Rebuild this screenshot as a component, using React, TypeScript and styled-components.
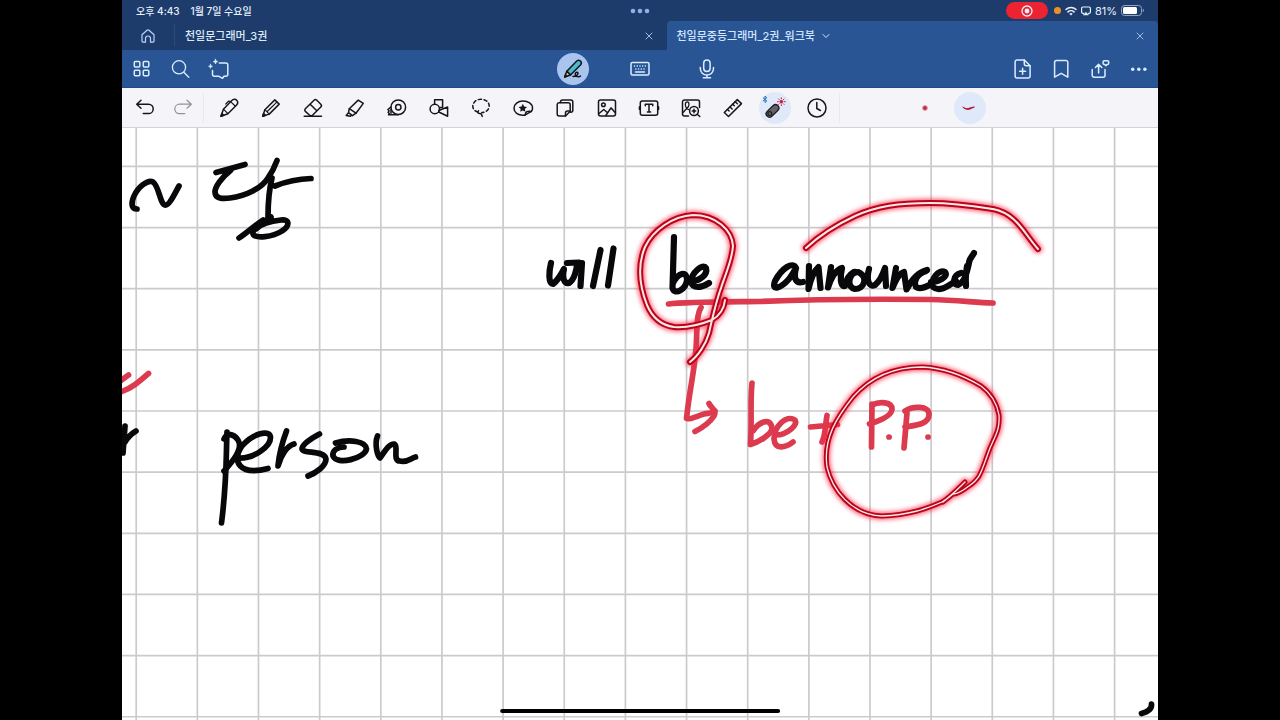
import React from "react";
import styled, { createGlobalStyle } from "styled-components";

const GlobalStyle = createGlobalStyle`
  * {
    box-sizing: border-box;
  }
  body {
    margin: 0;
    background: #000;
    font-family: Inter, "Noto Sans CJK KR", sans-serif;
  }
  button {
    font: inherit;
    color: inherit;
    border: none;
    background: none;
    padding: 0;
    cursor: pointer;
  }
`;

const Screen = styled.div`
  position: relative;
  display: flex;
  flex-direction: column;
  height: 100vh;
  max-width: 100vw;
  aspect-ratio: 259 / 180;
  margin: 0 auto;
  overflow: hidden;
  background: #fff;
`;

const StatusBar = styled.header`
  display: grid;
  grid-template-columns: 1fr auto 1fr;
  align-items: center;
  flex: 0 0 21px;
  padding: 0 14px;
  background: #1d3c6b;
  color: #e8f0fc;
  font-size: 11px;
  line-height: 16px;
`;

const Clock = styled.div`
  display: flex;
  gap: 11px;
  font-size: 10px;
  font-weight: 500;
`;

const StatusIcons = styled.div`
  display: flex;
  justify-content: flex-end;
  align-items: center;
  gap: 4px;
`;

const RecordPill = styled.span`
  display: flex;
  justify-content: center;
  align-items: center;
  width: 42px;
  height: 17px;
  margin-right: 2px;
  border-radius: 9px;
  background: #ec2330;
`;

const MicDot = styled.span`
  width: 7px;
  height: 7px;
  border-radius: 50%;
  background: #ee8f25;
`;

const TabBar = styled.nav`
  display: flex;
  flex: 0 0 29px;
  background: #1d3c6b;
`;

const HomeButton = styled.button`
  display: flex;
  justify-content: center;
  align-items: center;
  flex: 0 0 52px;
  color: #b9d5fa;
`;

const Tab = styled.div<{ $active?: boolean }>`
  display: flex;
  flex: 1;
  align-items: center;
  justify-content: space-between;
  padding: 0 14px 0 10px;
  border-radius: 4px 4px 0 0;
  background: ${(props) => (props.$active ? "#295594" : "transparent")};
  color: ${(props) => (props.$active ? "#d3e6ff" : "#dde8f8")};
`;

const TabDivider = styled.span`
  width: 1px;
  height: 22px;
  margin: 3px 0;
  background: #2c4c7d;
`;

const TabTitle = styled.button`
  display: flex;
  align-items: center;
  gap: 7px;
  font-size: 11px;
  font-weight: 500;
  line-height: 16px;
`;

const CloseButton = styled.button`
  display: flex;
  color: #9dbbe8;
`;

const NavBar = styled.div`
  display: grid;
  grid-template-columns: 1fr auto 1fr;
  flex: 0 0 38px;
  background: #295594;
  border-bottom: 1px solid #214a87;
  color: #d9edff;
`;

const NavGroup = styled.div<{ $end?: boolean }>`
  display: flex;
  justify-content: ${(props) => (props.$end ? "flex-end" : "flex-start")};
`;

const NavButton = styled.button<{ $wide?: boolean }>`
  display: flex;
  justify-content: center;
  align-items: center;
  width: ${(props) => (props.$wide ? 67 : 39)}px;
`;

const ModeCircle = styled.span`
  display: flex;
  justify-content: center;
  align-items: center;
  width: 32px;
  height: 32px;
  border-radius: 50%;
  background: #a9c5ee;
`;

const Toolbar = styled.div`
  display: flex;
  align-items: center;
  flex: 0 0 40px;
  padding-left: 4px;
  background: #f5f4f8;
  border-bottom: 1px solid #d3d2d6;
  color: #17171a;
`;

const HistoryButton = styled.button`
  display: flex;
  justify-content: center;
  width: 38px;
  &:disabled {
    color: #929196;
  }
`;

const Divider = styled.span`
  width: 1px;
  height: 30px;
  margin: 0 4px 0 1px;
  background: #e9e8ed;
`;

const Tools = styled.div`
  display: grid;
  grid-auto-flow: column;
  grid-auto-columns: 1fr;
  justify-items: center;
  flex: 0 0 61%;
`;

const ToolButton = styled.button<{ $active?: boolean }>`
  display: flex;
  justify-content: center;
  align-items: center;
  width: 32px;
  height: 32px;
  border-radius: 50%;
  background: ${(props) => (props.$active ? "#dfe9fa" : "none")};
`;

const LaserOptions = styled.div`
  display: flex;
  gap: 13px;
  margin-left: 65px;
`;

const Page = styled.main`
  flex: 1;
  min-height: 0;
`;

const PageSvg = styled.svg`
  display: block;
  width: 100%;
  height: 100%;
`;

const HomeIndicator = styled.div`
  position: absolute;
  bottom: 7px;
  left: 50%;
  width: 27%;
  height: 4px;
  border-radius: 2px;
  background: #000;
  transform: translateX(-50%);
`;

interface IIconProps {
  children: React.ReactNode;
  width?: number;
  height?: number;
  strokeWidth?: number;
}

const Icon = ({ children, width = 20, height = 20, strokeWidth = 1.5 }: IIconProps) => (
  <svg
    width={width}
    height={height}
    viewBox={`0 0 ${width} ${height}`}
    overflow="visible"
    fill="none"
    stroke="currentColor"
    strokeWidth={strokeWidth}
    strokeLinecap="round"
    strokeLinejoin="round"
    aria-hidden="true"
  >
    {children}
  </svg>
);

const CloseIcon = () => (
  <Icon width={8} height={8} strokeWidth={1}>
    <path d="M1 1l6 6M7 1L1 7" />
  </Icon>
);

const tools = [
  {
    name: "Pen",
    icon: (
      <>
        <path d="M2 18.2L4.400 11.200 12.800 2.600C14.300 1 16.500 1 17.700 2.300s1.200 3.400-.3 4.900L8.900 15.700z" />
        <path d="M4.400 11.200l4.500 4.500M11.600 3.600l4.800 4.600M11.600 3.600L9.800 3 6.800 6" strokeWidth="1.200" />
        <path d="M2 18.200l2.600-.9-1.700-1.700z" fill="currentColor" />
      </>
    ),
  },
  {
    name: "Pencil",
    icon: (
      <>
        <path d="M1.700 18.300L3.900 11.700 13.800 1.900 18.200 6.100 8.200 16.100z" />
        <path d="M3.900 11.700l4.300 4.400M6 13.800l9.800-9.700" strokeWidth="1.200" />
        <path d="M1.700 18.300l2.800-.9-1.900-1.900z" fill="currentColor" />
      </>
    ),
  },
  {
    name: "Eraser",
    icon: (
      <>
        <path d="M2.300 10.800L11 2.200a2 2 0 012.800 0l4 4a2 2 0 010 2.800L9.500 17.200a2 2 0 01-2.800 0l-4.400-3.800a1.900 1.900 0 010-2.600zM7.200 6.200l6.600 6.600" />
        <path d="M1.200 18.200h17.300" />
      </>
    ),
  },
  {
    name: "Highlighter",
    icon: (
      <>
        <path d="M4.300 10.700L13.200 2.100 18.300 5.400 11 15.200z" />
        <path d="M4.300 10.700l-.8 4 4 3L11 15.200M3.500 14.700l-2.300 2.800 4.300.8.800-1" />
      </>
    ),
  },
  {
    name: "Tape",
    icon: (
      <>
        <circle cx="11.300" cy="9.200" r="7.300" />
        <circle cx="11.300" cy="9.200" r="2.700" />
        <path d="M3.800 9.200L.9 11.500l1.200 1.300-1 1.500 1.200 1.300-.8 1.200h9.800M4 11.500v3.800" />
      </>
    ),
  },
  {
    name: "Shapes",
    icon: (
      <>
        <path d="M5.600 6.300V1.700h8v7.700h-3" />
        <circle cx="5.800" cy="11" r="4.700" />
        <path d="M9.800 12.500L18.600 9v9.200l-8.800-4.200z" />
      </>
    ),
  },
  {
    name: "Lasso",
    icon: (
      <>
        <path d="M7 14C3.800 13.200 1.800 11 1.800 8.200 1.800 4.300 5.500 1.200 10 1.200s8.200 3 8.200 6.700-3.400 6.600-7.400 6.600" strokeDasharray="3.200 2.600" />
        <path d="M7.500 12.800c-1.600 1.500-.2 2.900 1.400 2.800 1.400 0 2 1 2.300 2.800" />
      </>
    ),
  },
  {
    name: "Stickers",
    icon: (
      <>
        <path d="M11.800 17.200H10c-5 0-9-2.700-9-7s4-7.100 9-7.100 9.500 2.600 9.500 7.100c0 1.300-.4 2.300-1.100 3.200z" />
        <path d="M12.300 17c-.2-3.300 2.200-4.300 6.100-3.600" />
        <path
          d="M9.800 5.800l1.300 2.700 2.900.4-2.100 2 .5 2.900-2.600-1.400-2.600 1.400.5-2.900-2.100-2 2.900-.4z"
          fill="currentColor"
          stroke="none"
        />
      </>
    ),
  },
  {
    name: "Elements",
    icon: (
      <>
        <path d="M5.500 4.500V4a2 2 0 012-2h8.300a2 2 0 012 2v8.200a2 2 0 01-2 2h-.3" />
        <path d="M4.200 4.700h9a2 2 0 012 2v6.500l-4.700 4.900H4.200a2 2 0 01-2-2V6.700a2 2 0 012-2z" />
        <path d="M10.500 18v-3a2 2 0 012-2h2.700" />
      </>
    ),
  },
  {
    name: "Image",
    icon: (
      <>
        <rect x="1.500" y="2" width="17" height="16" rx="2" />
        <circle cx="6.400" cy="6.800" r="1.800" />
        <path d="M2 15.500l4.800-4 3.700 3.200M8.800 17.500L14 9.800l4.300 5" />
      </>
    ),
  },
  {
    name: "Text",
    icon: (
      <>
        <rect x="1.300" y="3" width="17.400" height="14.200" rx="2" />
        <path d="M6.300 7.800V6.300h7.400v1.500M10 6.300V14M8.400 14h3.200" />
        <path d="M.7 9v2.200M19.300 9v2.200" strokeWidth="2" />
      </>
    ),
  },
  {
    name: "Image search",
    icon: (
      <>
        <path d="M7.500 18H3.500a2 2 0 01-2-2V4a2 2 0 012-2h13a2 2 0 012 2v5.500" />
        <path d="M2 14.500l3.500-3.800 2 .8M6 10.200C3.500 8.500 4 3.800 6.200 3.800S8.800 8.400 6 10.200z" strokeWidth="1.300" />
        <circle cx="13" cy="13" r="4.400" />
        <path d="M16.300 16.300l2.500 2.200M13 11.300v3.400M11.300 13h3.400" />
      </>
    ),
  },
  {
    name: "Ruler",
    icon: (
      <>
        <path d="M1.300 14.500L14.300 1.600l4.200 4L5.500 18.500z" />
        <path d="M4.500 11.500l1.600 1.500M7 9l2.200 2M9.700 6.300l1.600 1.500M12.200 3.800l2.200 2" />
      </>
    ),
  },
  {
    name: "Laser pointer",
    icon: (
      <>
        <path d="M4.500 15.800L10.500 10" stroke="#1c1c1f" strokeWidth="8" />
        <path d="M4.500 15.800L10.500 10" stroke="#646468" strokeWidth="5.400" />
        <circle cx="4.800" cy="15.600" r="1.900" stroke="#1c1c1f" strokeWidth="1.200" />
        <g stroke="#c91f3d" strokeWidth="1">
          <circle cx="16.300" cy="3.700" r="1.400" fill="#c91f3d" />
          <path d="M16.300-.2v.9M16.300 6.700v.9M12.400 3.700h.9M19.300 3.700h.9M13.600 1l.6.600M18.400 5.800l.6.600M19 1l-.6.600M14.200 5.800l-.6.600" />
        </g>
        <path d="M-1.800-.3L1.800 2.900 0 4.500v-6.400L1.800-.3l-3.600 3.200" stroke="#1f72c4" strokeWidth="1" />
      </>
    ),
  },
  {
    name: "Timer",
    icon: (
      <>
        <circle cx="10" cy="10" r="9" />
        <path d="M9.800 4.500v6l3.600 2" />
      </>
    ),
  },
];

const RED = "#dc3a4e";

const blackInk = [
  // ~
  "M137 209C131 209 131 203 134 196C138 187 148 179 153 182C159 186 160 204 165 205C169 206 175 193 179 186",
  // 당
  "M216 172.500L245 164.500M231 170C221 178 215 187 215 192C215 199 223 199 230 198C246 196 262 188 268 178C273 171 275 166 277 160.500",
  "M272 178C269 190 268 203 268 217M275 186C285 182 298 179 311 178.500",
  "M239 238C248 232 254 226 263 220M271 217C262 223 252 230 253 234C255 239 273 237 282 231C290 226 290 219 281 220C271 221 261 224 256 229",
  // r
  "M125 426L123 453M125 442C128 437 131 434 136 431",
  // person
  "M227 432C226 455 227 480 221.500 523",
  "M224 439C227 432 234 434 238 440C244 449 231 463 224 471",
  "M238 458C253 459 271 447 270.500 437C269 429 252 434 242 446C231 462 240 476 268 468.500",
  "M286.500 431C282 443 279 455 278 466C281 455 287 446 294 444",
  "M319.500 434C310 439 302 445 302 449C303 454 325 450 326 459C326 466 316 473 308 476",
  "M335.500 443C349 439 366 441 366.500 449C365 458 337 466 333 456C332 450 338 447 344 447",
  "M377.500 436C374 445 378 457 380 458C384 453 388 444 394 444C399 446 392 461 400 461C407 463 411 458 415.500 457",
  // comma
  "M1151.500 704C1152 709 1147 712 1141.500 713.500",
];

// smaller letters come out a little heavier
const smallInk = [
  // will
  "M551 263C549 271 548 284 553 284C558 280 561 275 564 269C562 278 564 284 569 283C574 280 577 270 577 263",
  "M567 263L579 262.500M582 263L580.500 286M600.500 250L593 286M613.500 248.500L608 285.500",
  // be
  "M674 237L672.500 288C675 296 686 289 687 280C687 270 678 273 673 283",
  "M692 281C699 281 708 275 706 268C703 263 691 273 691 282C693 289 701 288 709 283",
  // announced
  "M796 268C793 261 782 268 775 281C771 292 781 288 789 279C792 275 795 270 796 268C794 276 794 284 803 282",
  "M809 266L808.500 289C811 278 814 271 818.500 267L820.500 288",
  "M831 267L828 287.500C831 278 836 270 842 268C840 277 840 287 845 286C846 280 849 275 854 272",
  "M855 272C848 277 847 287 855 289C864 289 868 278 860 273C857 271 853 273 851 276",
  "M869 269C866 280 869 288 875 285C880 281 883 274 885 268L886 286",
  "M896 268L892.500 288C896 279 900 273 904 272L906.500 289.500C911 281 918 272 927 270",
  "M926 271C917 274 913 281 916 287C920 290 926 287 931 284",
  "M931 282C938 282 949 277 945 272C939 269 930 279 933 287C940 293 949 285 956 281",
  "M961 273C953 275 952 285 958 285C965 282 967 272 969 263C969 259 972 257 974 253M967 266C965 276 966 281 966 286",
];

const redInk = [
  "M119 382L128.500 375M119 392.500C131 389 140 381 148.500 373.500",
  "M668.500 304C685 302 720 302 760 301.500C820 299 880 299 930 299.500C960 300 976 303 993 303",
  "M701 307.500C697 314 697 325 696.500 340C696 365 690 385 686.500 418.500C690 420 697 416 704 414C709 413 713 413 715 411",
  "M709 403.500C711 408 717 410 714 416C710 422 702 428 695 431.500",
  // be +
  "M752 383C750 402 752 418 750.500 444.500C759 442 772 434 772 428C770 416 758 423 753 431",
  "M776 435C787 435 798 425 795 420C786 414 774 427 774 439C775 450 785 448 793 442",
  "M810.500 427L837.500 424.500M827 415.500C825 425 826 434 822 442",
  // P.P.
  "M872 404L871.500 447M872 405C880 401 892 402 892 409C892 416 879 421 869.500 424M889 437h.1",
  "M907 413L904 448M905 411C912 406 930 405 929 415C929 424 916 425 905 427M928 437h.1",
];

const laserStrokes = [
  {
    d: "M690 362C698 356 706 344 709 333C713 315 716 302 721 288C725 275 732 261 733 246C732 230 716 215 693 215C673 216 653 230 645 247C637 266 640 287 647 305C652 317 660 325 674 327C688 328 702 324 712 320C719 316 724 309 725 300",
    width: 6,
    core: 2,
  },
  {
    d: "M806 248C821 234 840 223 855 216C877 206 899 203 930 203C956 203 974 206 993 209C1017 214 1023 232 1038 249",
    width: 6,
    core: 2,
  },
  {
    d: "M965 482C957 490 949 498 942 502C926 509 909 515 882 516C851 515 832 489 827 467C823 438 837 417 853 397C868 380 891 367 922 367C945 368 966 377 981 386C992 394 997 404 999 415C1000 429 996 434 990 448C981 472 981 478 969 486C963 490 959 494 953 494L943 502",
    width: 5,
    core: 1.3,
  },
];

const gridStep = 61.15;

const Notebook = () => (
  <PageSvg viewBox="122 128 1036 592" preserveAspectRatio="xMinYMin slice" role="img" aria-label="Notebook page">
    <defs>
      <filter id="glow" x="-20%" y="-20%" width="140%" height="140%">
        <feGaussianBlur stdDeviation="2.200" />
      </filter>
    </defs>
    <g stroke="#cbcacd" strokeWidth="1.700">
      {Array.from({ length: 17 }, (_, i) => (
        <path key={`v${i}`} d={`M${136.2 + i * gridStep} 128v600`} />
      ))}
      {Array.from({ length: 10 }, (_, i) => (
        <path key={`h${i}`} d={`M122 ${166.4 + i * gridStep}h1036`} />
      ))}
    </g>
    <g fill="none" strokeLinecap="round" strokeLinejoin="round">
      <g stroke={RED} strokeWidth="5.700">
        {redInk.map((d) => (
          <path key={d} d={d} />
        ))}
      </g>
      <g stroke="#08080a" strokeWidth="5.700">
        {blackInk.map((d) => (
          <path key={d} d={d} />
        ))}
      </g>
      <g stroke="#08080a" strokeWidth="6.200">
        {smallInk.map((d) => (
          <path key={d} d={d} />
        ))}
      </g>
      {laserStrokes.map(({ d, width, core }) => (
        <g key={d}>
          <path d={d} stroke="#ff2843" strokeWidth={width + 3} opacity="0.7" filter="url(#glow)" />
          <path d={d} stroke="#b8041c" strokeWidth={width} />
          <path d={d} stroke="#ffe9e6" strokeWidth={core} />
        </g>
      ))}
    </g>
  </PageSvg>
);

const App = () => (
  <>
    <GlobalStyle />
    <Screen>
      <StatusBar>
        <Clock>
          <span>오후 4:43</span>
          <span>1월 7일 수요일</span>
        </Clock>
        <Icon width={20} height={6}>
          <g fill="#8fb1e8" stroke="none">
            <circle cx="3" cy="3" r="2.300" />
            <circle cx="10" cy="3" r="2.300" />
            <circle cx="17" cy="3" r="2.300" />
          </g>
        </Icon>
        <StatusIcons>
          <RecordPill>
            <Icon width={12} height={12} strokeWidth={1.3}>
              <circle cx="6" cy="6" r="5" />
              <circle cx="6" cy="6" r="2.400" fill="currentColor" stroke="none" />
            </Icon>
          </RecordPill>
          <MicDot />
          <Icon width={12} height={10} strokeWidth={1.6}>
            <path d="M1 3.500a7.300 7.300 0 0110 0M3 5.900a4.400 4.400 0 016 0" />
            <path d="M6 9.500L4.300 7.800a2.400 2.400 0 013.400 0z" fill="currentColor" stroke="none" />
          </Icon>
          <Icon width={10} height={10} strokeWidth={1.2}>
            <path d="M2.500 7.300H1.800a1.200 1.200 0 01-1.200-1.200V2.200A1.200 1.200 0 011.800 1h6.400a1.200 1.200 0 011.200 1.200v3.900a1.200 1.200 0 01-1.200 1.200h-.7" />
            <path d="M5 6.200L7.500 9h-5z" fill="currentColor" strokeWidth="0.500" />
          </Icon>
          <span>81%</span>
          <Icon width={23} height={11} strokeWidth={1}>
            <rect x="0.500" y="0.500" width="20" height="10" rx="3" stroke="#8fa4c6" />
            <rect x="2" y="2" width="14" height="7" rx="1.500" fill="#fff" stroke="none" />
            <path d="M22.300 4.500v2" stroke="#8fa4c6" />
          </Icon>
        </StatusIcons>
      </StatusBar>

      <TabBar>
        <HomeButton aria-label="Home">
          <Icon width={14} height={14} strokeWidth={1.2}>
            <path d="M1 5.800L6 1.300a1.500 1.500 0 012 0l5 4.500v6.200a1.200 1.200 0 01-1.200 1.200H9.500V9.500a2.500 2.500 0 00-5 0v3.700H2.200A1.200 1.200 0 011 12z" />
          </Icon>
        </HomeButton>
        <TabDivider />
        <Tab>
          <TabTitle>천일문그래머_3권</TabTitle>
          <CloseButton aria-label="Close 천일문그래머_3권">
            <CloseIcon />
          </CloseButton>
        </Tab>
        <Tab $active>
          <TabTitle>
            천일문중등그래머_2권_워크북
            <Icon width={8} height={6} strokeWidth={1}>
              <path d="M1 1.500l3 3 3-3" />
            </Icon>
          </TabTitle>
          <CloseButton aria-label="Close 천일문중등그래머_2권_워크북">
            <CloseIcon />
          </CloseButton>
        </Tab>
      </TabBar>

      <NavBar>
        <NavGroup>
          <NavButton aria-label="Thumbnails">
            <Icon>
              <rect x="2.300" y="2.600" width="5.500" height="5.500" rx="1" />
              <rect x="11.300" y="2.600" width="5.500" height="5.500" rx="1" />
              <rect x="2.300" y="11.300" width="5.500" height="5.500" rx="1" />
              <rect x="11.300" y="11.300" width="5.500" height="5.500" rx="1" />
            </Icon>
          </NavButton>
          <NavButton aria-label="Search">
            <Icon strokeWidth={1.3}>
              <circle cx="8" cy="8.300" r="6.600" />
              <path d="M12.800 13.200l5 5" />
            </Icon>
          </NavButton>
          <NavButton aria-label="AI assistant">
            <Icon>
              <path d="M9.300 4h6.500a2 2 0 012 2v9.300a2 2 0 01-2 2h-1.800l-1.500 2-3.500-2H4.500a2 2 0 01-2-2v-3.800" />
              <path
                d="M5.500.2l.7 1.700 1.700.7-1.700.7-.7 1.700-.7-1.700-1.700-.7 1.700-.7zM.5 5.200L1 6.700l1.500.6-1.500.6-.5 1.500L0 7.900l-1.500-.6L0 6.700z"
                fill="currentColor"
                strokeWidth="0.600"
              />
            </Icon>
          </NavButton>
        </NavGroup>
        <NavGroup>
          <NavButton $wide aria-label="Writing mode">
            <ModeCircle>
              <Icon>
                <g stroke="#10151d">
                  <path d="M3.800 12.300L13.800 2a2.700 2.700 0 013.900 3.700L7.500 16z" fill="#4fb9cd" />
                  <path d="M3.800 12.300L1.700 18l5.800-2z" fill="#e6c653" />
                  <path d="M1.700 18l1.900-.7-1.200-1.200z" fill="#10151d" />
                  <path d="M10 17.500c2.500 0 5.500-1.500 5-3.500-1.200-1.800-3.500 0-2.500 2.300 1.200 2 4 1.800 5 .7" />
                </g>
              </Icon>
            </ModeCircle>
          </NavButton>
          <NavButton $wide aria-label="Keyboard mode">
            <Icon>
              <rect x="1" y="3.500" width="18" height="12.500" rx="1.500" />
              <path d="M5.500 13h9" />
              <path d="M4.500 7h.1M7.200 7h.1M9.900 7h.1M12.600 7h.1M15.300 7h.1M5.800 10h.1M8.500 10h.1M11.200 10h.1M13.900 10h.1" strokeWidth="1.500" />
            </Icon>
          </NavButton>
          <NavButton $wide aria-label="Record audio">
            <Icon>
              <rect x="6.700" y="1" width="6.400" height="11.500" rx="3.200" />
              <path d="M3.300 8.500v1a6.600 6.600 0 0013.200 0v-1M9.900 16v2.700M6.300 18.700h7.200" />
            </Icon>
          </NavButton>
        </NavGroup>
        <NavGroup $end>
          <NavButton aria-label="Add page">
            <Icon>
              <path d="M12.300 1H5.100a2 2 0 00-2 2v14a2 2 0 002 2h11a2 2 0 002-2V6.800z" />
              <path d="M12.300 1v3.800a2 2 0 002 2h3.800M10.600 9.300v6M7.600 12.300h6" />
            </Icon>
          </NavButton>
          <NavButton aria-label="Bookmark">
            <Icon>
              <path d="M3.600 18.200V3.200a1.800 1.800 0 011.800-1.800h9.600a1.800 1.800 0 011.800 1.800v15l-6.600-3.900z" />
            </Icon>
          </NavButton>
          <NavButton aria-label="Share">
            <Icon>
              <path d="M2.200 10.500v5.700a2 2 0 002 2h8.800a2 2 0 002-2v-5.700M8.600 14V5.500M5.400 8.500l3.200-3.200 3.200 3.200" />
              <path d="M14.300 1.800h3.200a1.200 1.200 0 011.200 1.200v1.300a1.200 1.200 0 01-1.200 1.200H17l-1.100 1.300-1.100-1.300h-.5a1.200 1.200 0 01-1.200-1.200V3a1.200 1.200 0 011.200-1.200z" />
            </Icon>
          </NavButton>
          <NavButton aria-label="More">
            <Icon>
              <g fill="currentColor" stroke="none">
                <circle cx="3.700" cy="10.300" r="1.700" />
                <circle cx="9.800" cy="10.300" r="1.700" />
                <circle cx="15.900" cy="10.300" r="1.700" />
              </g>
            </Icon>
          </NavButton>
        </NavGroup>
      </NavBar>

      <Toolbar>
        <HistoryButton aria-label="Undo">
          <Icon>
            <path d="M6 2.200L1.700 6.200 6 10.200M1.700 6.200h11.800a4.700 4.700 0 010 9.400H8.300" />
          </Icon>
        </HistoryButton>
        <HistoryButton aria-label="Redo" disabled>
          <Icon strokeWidth={1.2}>
            <path d="M14 2.200l4.300 4-4.300 4M18.300 6.200H6.500a4.700 4.700 0 000 9.400h5.200" />
          </Icon>
        </HistoryButton>
        <Divider />
        <Tools>
          {tools.map(({ name, icon }) => (
            <ToolButton key={name} aria-label={name} $active={name === "Laser pointer"}>
              <Icon>{icon}</Icon>
            </ToolButton>
          ))}
        </Tools>
        <Divider />
        <LaserOptions>
          <ToolButton aria-label="Laser dot">
            <Icon>
              <circle cx="10" cy="10" r="2.500" fill="#c3283d" stroke="#ecaab4" strokeWidth="1" />
            </Icon>
          </ToolButton>
          <ToolButton aria-label="Laser trail" $active>
            <Icon>
              <path d="M3 9.200c1.800.8 3.300 1.600 5 1.300 2-.4 3.700-1.600 6.500-1.500-2.300.9-4 2.400-6.500 2.500-2.200.1-3.800-1-5-2.300z" fill="#a90f2a" stroke="#a90f2a" strokeWidth="0.700" />
            </Icon>
          </ToolButton>
        </LaserOptions>
      </Toolbar>

      <Page>
        <Notebook />
      </Page>
      <HomeIndicator />
    </Screen>
  </>
);

export default App;
